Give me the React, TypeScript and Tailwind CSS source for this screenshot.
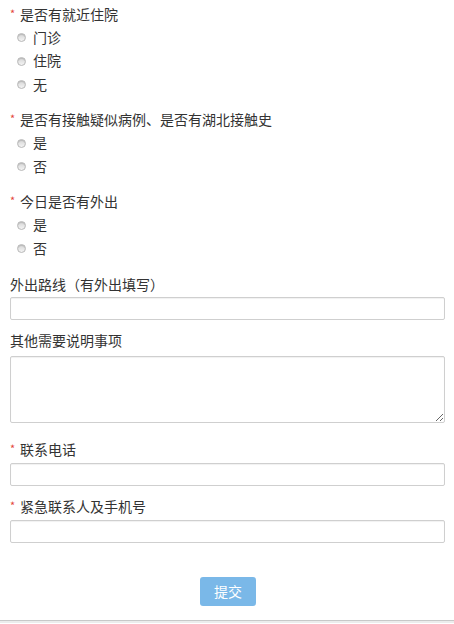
const font = { fontFamily: '"Microsoft YaHei", "Noto Sans CJK SC", "Noto Sans", sans-serif' };

type Question = { label: string; options: string[]; gap: string; listGap: string };

const questions: Question[] = [
  { label: '是否有就近住院', options: ['门诊', '住院', '无'], gap: 'mt-0', listGap: 'mt-[1px]' },
  { label: '是否有接触疑似病例、是否有湖北接触史', options: ['是', '否'], gap: 'mt-[13px]', listGap: 'mt-[2px]' },
  { label: '今日是否有外出', options: ['是', '否'], gap: 'mt-[13px]', listGap: 'mt-[2px]' },
];

function Label({ text, required }: { text: string; required?: boolean }) {
  return (
    <div className="h-[20px] leading-[18px] flex items-start">
      {required && <span className="text-[#e4453a] text-[11px] w-[10px] -mt-[1px]">*</span>}
      <span>{text}</span>
    </div>
  );
}

function Radio({ text }: { text: string }) {
  return (
    <div className="h-[23.5px] flex items-center pl-[7px]">
      <span className="w-[9px] h-[9px] rounded-full border border-[#b8b8b8] bg-gradient-to-b from-[#d6d6d6] to-[#f4f4f4] shadow-[inset_0_1px_1px_rgba(0,0,0,0.15)]" />
      <span className="ml-[7px] leading-[18px] -mt-[2px]">{text}</span>
    </div>
  );
}

const inputCls =
  'block w-full h-[23px] border border-[#cfcfcf] rounded-[2px] shadow-[inset_0_1px_1px_rgba(0,0,0,0.06)] bg-white';

export default function App() {
  return (
    <div className="w-[454px] h-[624px] bg-white text-[14px] text-[#333] flex flex-col" style={font}>
      <div className="flex-1 pl-[10px] pr-[9px] pt-[5px]">
        {questions.map((q) => (
          <div key={q.label} className={q.gap}>
            <Label text={q.label} required />
            <div className={q.listGap}>
              {q.options.map((o) => (
                <Radio key={o} text={o} />
              ))}
            </div>
          </div>
        ))}

        <div className="mt-[14px]">
          <Label text="外出路线（有外出填写）" />
          <input className={`${inputCls} mt-[2px]`} />
        </div>

        <div className="mt-[11px]">
          <Label text="其他需要说明事项" />
          <textarea className="block w-full h-[67px] mt-[5px] border border-[#cfcfcf] rounded-[2px] shadow-[inset_0_1px_1px_rgba(0,0,0,0.06)] resize-y" />
        </div>

        <div className="mt-[17px]">
          <Label text="联系电话" required />
          <input className={`${inputCls} mt-[3px]`} />
        </div>

        <div className="mt-[11px]">
          <Label text="紧急联系人及手机号" required />
          <input className={`${inputCls} mt-[3px]`} />
        </div>

        <div className="mt-[34px] flex justify-center">
          <button className="w-[56px] h-[29px] rounded-[3px] bg-[#7ab8e8] text-white text-[14px] ml-[1px]">
            提交
          </button>
        </div>
      </div>
      <div className="h-[3px] border-t border-[#c8c8c8] bg-[#ececec] mb-[1px]" />
    </div>
  );
}
